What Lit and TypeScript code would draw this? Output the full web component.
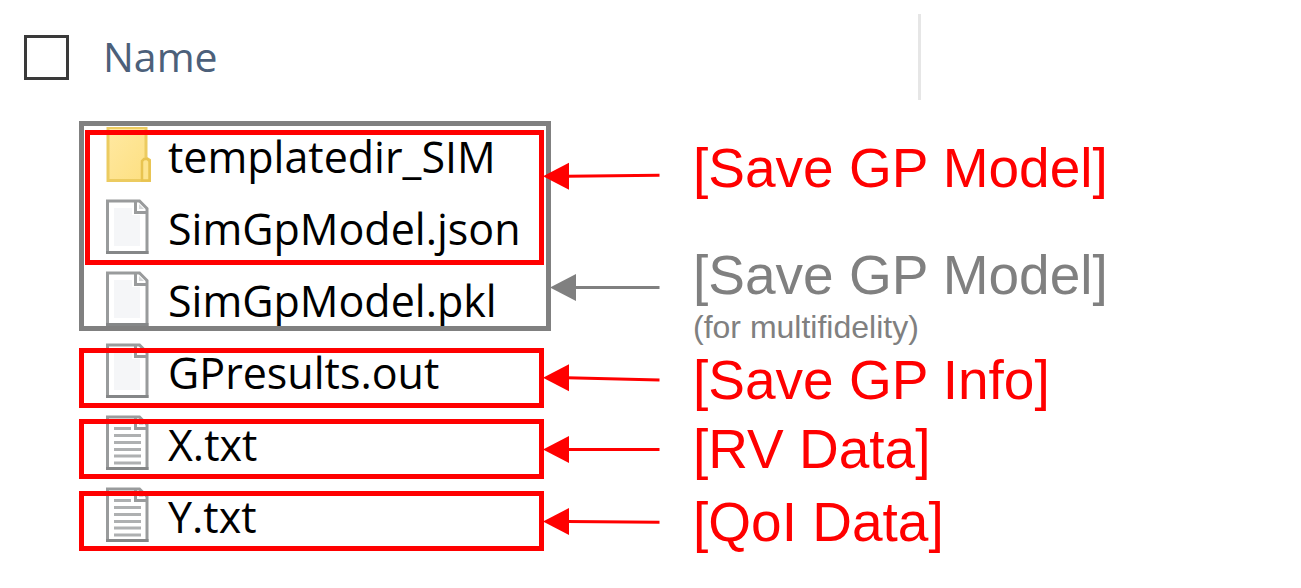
import { LitElement, html, svg, css } from "lit";
import { customElement } from "lit/decorators.js";

type Kind = "folder" | "blank" | "text";

const FILES: { name: string; kind: Kind }[] = [
  { name: "templatedir_SIM", kind: "folder" },
  { name: "SimGpModel.json", kind: "blank" },
  { name: "SimGpModel.pkl", kind: "blank" },
  { name: "GPresults.out", kind: "blank" },
  { name: "X.txt", kind: "text" },
  { name: "Y.txt", kind: "text" },
];

const LABELS: { text: string; note?: string }[] = [
  { text: "[Save GP Model]" },
  { text: "[Save GP Model]", note: "(for multifidelity)" },
  { text: "[Save GP Info]" },
  { text: "[RV Data]" },
  { text: "[QoI Data]" },
];

// Tip and tail of each arrow, in the arrow column's own coordinates.
const ARROWS = [
  { x: 2, y: 55.3, tail: 54.3, color: "#ff0000" },
  { x: 9, y: 166.5, tail: 166.5, color: "#808080" },
  { x: 2, y: 256.8, tail: 259, color: "#ff0000" },
  { x: 2, y: 328.5, tail: 328.5, color: "#ff0000" },
  { x: 2, y: 400.5, tail: 401.2, color: "#ff0000" },
];

@customElement("file-icon")
export class FileIcon extends LitElement {
  static properties = { kind: {} };
  declare kind: Kind;

  static styles = css`
    :host {
      display: block;
      width: 46px;
      height: 60px;
    }
    svg {
      display: block;
    }
  `;

  render() {
    if (this.kind === "folder") {
      return html`<svg width="46" height="60" viewBox="0 0 46 60" aria-hidden="true">
        <defs>
          <linearGradient id="g" x1="0" y1="0" x2="1" y2="1">
            <stop offset="0" stop-color="#ffe9a2" />
            <stop offset="1" stop-color="#fddf80" />
          </linearGradient>
        </defs>
        <path d="M3 0.5H41V31L44.5 33V53.5H3Z" fill="url(#g)" stroke="#eccb60" stroke-width="3" />
        <path d="M37 53.5V34L39 32H42.5L44.5 34V53.5Z" fill="#fde48f" stroke="#e8c350" stroke-width="2.5" />
      </svg>`;
    }
    return html`<svg width="46" height="60" viewBox="0 0 46 60" aria-hidden="true">
      <path d="M2.5 2H34.5L42 9.5V53.5H2.5Z" fill="#fff" stroke="#999b9c" stroke-width="3" />
      <path d="M1 53.5H43.5" stroke="#858788" stroke-width="3" />
      ${this.kind === "blank"
        ? svg`<path d="M9 9H27V16H35V47H9Z" fill="#f5f6f8" />`
        : svg`<path d="M9 13.5H26M9 20.5H36M9 27.5H36M9 34.5H36M9 41H36M9 48H36"
            stroke="#aeb0b1" stroke-width="3.2" />`}
      <path d="M30.5 2V13.5H42" fill="#fff" stroke="#999b9c" stroke-width="3" />
      <path d="M34 5L39 10H34Z" fill="#d5d7d8" />
    </svg>`;
  }
}

@customElement("app-root")
export class AppRoot extends LitElement {
  static styles = css`
    :host {
      display: block;
      min-height: 100vh;
      background: #fff;
      color: #000;
      overflow: hidden;
    }
    .header {
      display: flex;
      align-items: center;
      padding: 14px 24px 21px;
    }
    .select-all {
      appearance: none;
      flex: none;
      box-sizing: border-box;
      width: 45px;
      height: 45px;
      margin: 0;
      border: 3px solid #3a3a3a;
      background: #fff;
    }
    .column {
      flex: 0 1 852px;
      box-sizing: border-box;
      height: 86px;
      padding-left: 34px;
      border-right: 3px solid #e6e6e6;
      font: 41px/84px "Open Sans", "Noto Sans", sans-serif;
      color: #4c607a;
    }
    .body {
      display: flex;
      align-items: flex-start;
      padding-left: 79px;
    }
    .list {
      position: relative;
      flex: none;
      width: 462px;
    }
    .files {
      margin: 0;
      padding: 0;
      list-style: none;
    }
    .file {
      display: flex;
      align-items: center;
      gap: 17px;
      height: 72px;
      padding-left: 26px;
      font: 43px/60px "Open Sans", "Noto Sans", sans-serif;
      white-space: nowrap;
    }
    .frame {
      position: absolute;
      box-sizing: border-box;
      left: 0;
      width: 465px;
      height: 60px;
      border: 5px solid #ff0000;
    }
    .multi {
      top: 0;
      width: 472px;
      height: 210px;
      border-color: #808080;
    }
    .model {
      top: 9px;
      left: 6px;
      width: 459px;
      height: 135px;
    }
    .info {
      top: 227px;
    }
    .rv {
      top: 298px;
    }
    .qoi {
      top: 370px;
    }
    .arrows {
      position: relative;
      flex: none;
      display: block;
    }
    .labels {
      display: grid;
      grid-template-rows: 107px 105px 69px 73px auto;
      margin: 0;
      padding: 15px 0 0 32px;
      list-style: none;
      font: 55px/64px "Liberation Sans", Arial, sans-serif;
      color: #ff0000;
      white-space: nowrap;
    }
    .muted {
      color: #808080;
    }
    .note {
      display: block;
      font-size: 32px;
      line-height: 40px;
    }
  `;

  render() {
    return html`
      <div class="header">
        <input class="select-all" type="checkbox" id="all" />
        <label class="column" for="all">Name</label>
      </div>
      <div class="body">
        <div class="list">
          <ul class="files">
            ${FILES.map(
              (f) => html`<li class="file"><file-icon .kind=${f.kind}></file-icon><span>${f.name}</span></li>`
            )}
          </ul>
          <div class="frame multi"></div>
          <div class="frame model"></div>
          <div class="frame info"></div>
          <div class="frame rv"></div>
          <div class="frame qoi"></div>
        </div>
        <svg class="arrows" width="120" height="432" viewBox="0 0 120 432" aria-hidden="true">
          ${ARROWS.map(
            (a) => svg`
              <path d="M${a.x + 24} ${a.y}L118.5 ${a.tail}" stroke=${a.color} stroke-width="3" />
              <path d="M${a.x} ${a.y}L${a.x + 26} ${a.y - 13.5}V${a.y + 13.5}Z" fill=${a.color} />`
          )}
        </svg>
        <ul class="labels">
          ${LABELS.map(
            (l) => html`<li class=${l.note ? "muted" : ""}>${l.text}${l.note ? html`<span class="note">${l.note}</span>` : ""}</li>`
          )}
        </ul>
      </div>
    `;
  }
}
